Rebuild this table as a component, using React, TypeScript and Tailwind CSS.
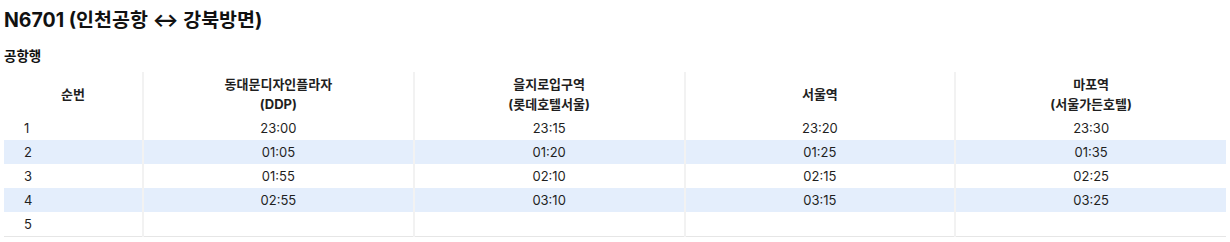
const stops = [
  ['동대문디자인플라자', '(DDP)'],
  ['을지로입구역', '(롯데호텔서울)'],
  ['서울역', ''],
  ['마포역', '(서울가든호텔)'],
];

const rows: string[][] = [
  ['23:00', '23:15', '23:20', '23:30'],
  ['01:05', '01:20', '01:25', '01:35'],
  ['01:55', '02:10', '02:15', '02:25'],
  ['02:55', '03:10', '03:15', '03:25'],
  ['', '', '', ''],
];

export default function App() {
  return (
    <div className="bg-white px-1 pt-[6px] text-[#1f1f1f] font-['Inter','Noto_Sans_CJK_KR',sans-serif]">
      <h1 className="text-[19.5px] leading-[28px] font-bold text-[#111]">N6701 (인천공항 ↔ 강북방면)</h1>

      <h2 className="mt-3 text-[13.5px] leading-[20px] font-bold text-[#111]">공항행</h2>

      {/* Timetable */}
      <table className="mt-[6px] w-full border-collapse table-fixed text-[13px] leading-[20px]">
        <colgroup>
          <col className="w-[139px]" />
          <col />
          <col />
          <col />
          <col />
        </colgroup>
        <thead>
          <tr>
            <th className="py-0.5 font-bold text-center border-r-2 border-[#f2f2f2]">순번</th>
            {stops.map((s, i) => (
              <th
                key={s[0]}
                className={`py-0.5 font-bold text-center ${i < stops.length - 1 ? 'border-r-2 border-[#f2f2f2]' : ''}`}
              >
                {s[0]}
                {s[1] && <br />}
                {s[1]}
              </th>
            ))}
          </tr>
        </thead>
        <tbody>
          {rows.map((r, idx) => (
            <tr
              key={idx}
              className={`${idx % 2 === 1 ? 'bg-[#e4eefc]' : 'bg-white'} ${idx === rows.length - 1 ? 'border-b border-[#e6e6e6]' : ''}`}
            >
              <td className="h-6 py-0.5 pl-5 border-r-2 border-[#f2f2f2]">{idx + 1}</td>
              {r.map((t, i) => (
                <td
                  key={i}
                  className={`h-6 py-0.5 text-center ${i < r.length - 1 ? 'border-r-2 border-[#f2f2f2]' : ''}`}
                >
                  {t}
                </td>
              ))}
            </tr>
          ))}
        </tbody>
      </table>
    </div>
  );
}
